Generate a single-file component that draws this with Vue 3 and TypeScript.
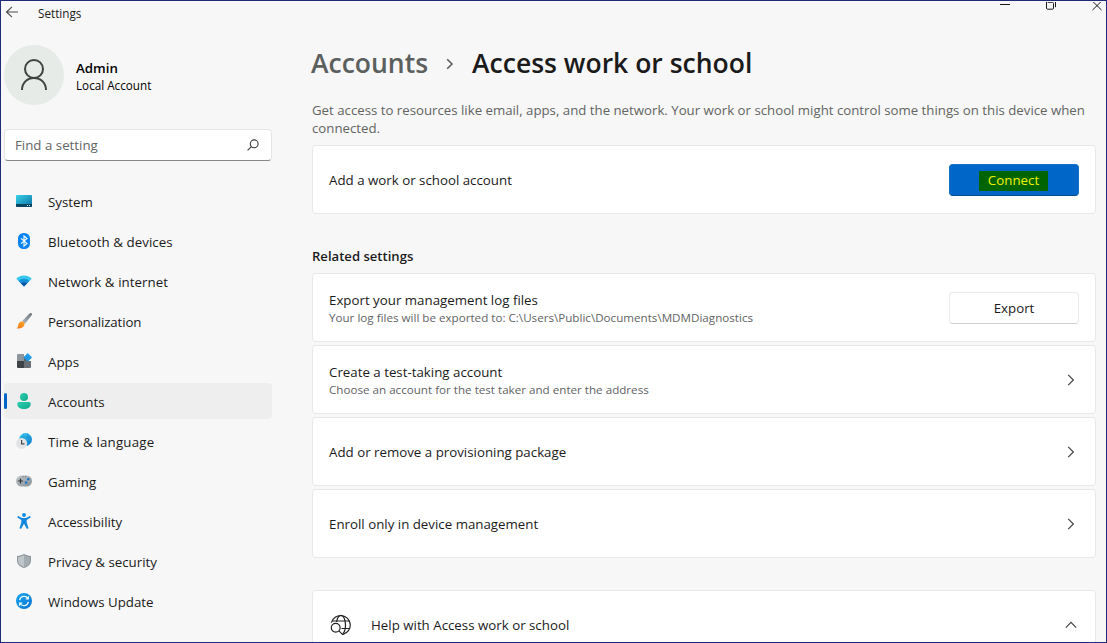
<script setup lang="ts">
interface NavItem {
  id: string
  label: string
}

interface SettingRow {
  id: string
  title: string
  detail?: string
  action?: string
}

const navItems: NavItem[] = [
  { id: 'system', label: 'System' },
  { id: 'bluetooth', label: 'Bluetooth & devices' },
  { id: 'network', label: 'Network & internet' },
  { id: 'personalization', label: 'Personalization' },
  { id: 'apps', label: 'Apps' },
  { id: 'accounts', label: 'Accounts' },
  { id: 'time', label: 'Time & language' },
  { id: 'gaming', label: 'Gaming' },
  { id: 'accessibility', label: 'Accessibility' },
  { id: 'privacy', label: 'Privacy & security' },
  { id: 'update', label: 'Windows Update' },
]

const activeId = 'accounts'

const rows: SettingRow[] = [
  {
    id: 'export',
    title: 'Export your management log files',
    detail: 'Your log files will be exported to: C:\\Users\\Public\\Documents\\MDMDiagnostics',
    action: 'Export',
  },
  {
    id: 'test',
    title: 'Create a test-taking account',
    detail: 'Choose an account for the test taker and enter the address',
  },
  { id: 'package', title: 'Add or remove a provisioning package' },
  { id: 'enroll', title: 'Enroll only in device management' },
]
</script>

<template>
  <div class="window">
    <header class="titlebar">
      <svg class="back" width="14" height="12" viewBox="0 0 14 12" fill="none" stroke="#4c4c4c" stroke-width="1.1">
        <path d="M13 6H1.500M7 .9L1.500 6 7 11.100" />
      </svg>
      <span class="app-name">Settings</span>
      <div class="controls">
        <svg width="110" height="10" viewBox="0 0 110 10" fill="none" stroke="#1a1a1a" stroke-width="1">
          <path d="M4 2.5h10" />
          <path d="M50.5 0v6a1.2 1.2 0 0 0 1.2 1.200h4.600a1.200 1.200 0 0 0 1.200-1.200V1.500a1.200 1.200 0 0 0-1.200-1.200h-4.600M59.500 0v5.200" />
          <path d="M96.300-1l9.200 9M105.700-1l-9.200 9" />
        </svg>
      </div>
    </header>

    <div class="body">
      <aside class="sidebar">
        <div class="profile">
          <div class="avatar">
            <svg width="28" height="32" viewBox="0 0 28 32" fill="none" stroke="#3f4241" stroke-width="2">
              <circle cx="14" cy="10" r="9" />
              <path d="M2 31c0-7 5-12 12-12s12 5 12 12" />
            </svg>
          </div>
          <div class="who">
            <div class="name">Admin</div>
            <div class="kind">Local Account</div>
          </div>
        </div>

        <div class="search">
          <span>Find a setting</span>
          <svg width="12" height="12" viewBox="0 0 12 12" fill="none" stroke="#3c3c3c" stroke-width="1.1">
            <circle cx="7.2" cy="4.8" r="3.9" />
            <path d="M4.4 7.700L.6 11.400" />
          </svg>
        </div>

        <nav>
          <div
            v-for="item in navItems"
            :key="item.id"
            class="nav-item"
            :class="[item.id, { active: item.id === activeId }]"
          >
            <svg width="16" height="16" viewBox="0 0 16 16">
              <template v-if="item.id === 'system'">
                <defs>
                  <linearGradient id="gSys" x1="0" y1="0" x2="1" y2="1">
                    <stop offset="0" stop-color="#38d3e6" /><stop offset="1" stop-color="#0a6fa6" />
                  </linearGradient>
                </defs>
                <rect y="2" width="16" height="12" rx="1" fill="url(#gSys)" />
                <path d="M0 11h16v2a1 1 0 0 1-1 1H1a1 1 0 0 1-1-1z" fill="#0b4561" />
                <path d="M11 12.500h1M13 12.500h1" stroke="#c8edf8" />
              </template>
              <template v-else-if="item.id === 'bluetooth'">
                <rect x="2" width="12" height="16" rx="5.500" fill="#0a84f4" />
                <path d="M5 5.300l6 5.200-3 2.600V2.900l3 2.600-6 5.200" fill="none" stroke="#fff" stroke-width="1.100" />
              </template>
              <template v-else-if="item.id === 'network'">
                <path d="M.3 5.700C4.600 1.500 11.400 1.500 15.700 5.700L8 13.600z" fill="#35c6f0" />
                <path d="M2.600 8C5.600 5 10.400 5 13.400 8L8 13.600z" fill="#1690d6" />
                <path d="M5 10.400c1.700-1.700 4.300-1.700 6 0l-3 3.200z" fill="#0b55a4" />
              </template>
              <template v-else-if="item.id === 'personalization'">
                <defs>
                  <linearGradient id="gBrush" x1="1" y1="0" x2="0" y2="1">
                    <stop offset="0" stop-color="#6b7379" /><stop offset="1" stop-color="#b4bec5" />
                  </linearGradient>
                  <linearGradient id="gTip" x1="1" y1="0" x2="0" y2="1">
                    <stop offset="0" stop-color="#ffa928" /><stop offset="1" stop-color="#ee7414" />
                  </linearGradient>
                </defs>
                <path d="M15.600.3c.7.7.3 1.700-.3 2.500L8.800 11 6 8.200 13 .9c.8-.8 1.900-1.200 2.600-.6z" fill="url(#gBrush)" />
                <path d="M6.500 8.600c1.700.3 2.600 1.800 1.800 3.600C7 15 3.500 16 .6 15.200c1.500-.7 1.300-1.700 1.700-3.500.5-2 2.100-3.400 4.200-3.100z" fill="url(#gTip)" />
              </template>
              <template v-else-if="item.id === 'apps'">
                <path d="M1 2a1 1 0 0 1 1-1h6v7H1z" fill="#8d969c" />
                <path d="M1 8h7v7H2a1 1 0 0 1-1-1z" fill="#3e4347" />
                <path d="M8 8h7v6a1 1 0 0 1-1 1H8z" fill="#687076" />
                <path d="M8 3v5h5z" fill="#596167" />
                <path d="M11.800.5l3.900 3.900-3.900 3.900-3.900-3.900z" fill="#1c9bea" stroke="#1c9bea" stroke-width=".8" stroke-linejoin="round" />
              </template>
              <template v-else-if="item.id === 'accounts'">
                <defs>
                  <linearGradient id="gAcc" x1="0" y1="0" x2="1" y2="1">
                    <stop offset="0" stop-color="#2bcfae" /><stop offset="1" stop-color="#12a88f" />
                  </linearGradient>
                </defs>
                <circle cx="8" cy="4" r="4" fill="url(#gAcc)" />
                <path d="M3 9h10a1.700 1.700 0 0 1 1.700 1.700C14.700 14 12 16 8 16s-6.700-2-6.700-5.300A1.700 1.700 0 0 1 3 9z" fill="url(#gAcc)" />
              </template>
              <template v-else-if="item.id === 'time'">
                <defs>
                  <linearGradient id="gGlobe" x1="0" y1="0" x2="1" y2="1">
                    <stop offset="0" stop-color="#45d6ee" /><stop offset="1" stop-color="#0a76cb" />
                  </linearGradient>
                </defs>
                <circle cx="9.500" cy="6.500" r="6.500" fill="url(#gGlobe)" />
                <path d="M4 4h11.500M4 9h11.500M8 .2c-2 4-2 8 0 12.500M11 .2c2 4 2 8 0 12.500" stroke="#0d86ce" stroke-opacity=".6" stroke-width=".7" fill="none" />
                <circle cx="5.600" cy="10.400" r="5.500" fill="#e2e3e4" />
                <path d="M5.600 7v3.800h2.900" fill="none" stroke="#45494c" stroke-width="1.200" />
              </template>
              <template v-else-if="item.id === 'gaming'">
                <defs>
                  <linearGradient id="gPad" x1="0" y1="0" x2="1" y2="1">
                    <stop offset="0" stop-color="#c5ccd0" /><stop offset="1" stop-color="#838c92" />
                  </linearGradient>
                </defs>
                <rect y="2.500" width="16" height="11" rx="5.500" fill="url(#gPad)" />
                <path d="M4.500 5.500v5M2 8h5" stroke="#30363a" stroke-width="1.200" />
                <path d="M6.500 3.800h1M9 3.800h1" stroke="#5d666c" />
                <circle cx="12.200" cy="6.300" r="1.200" fill="#1476cf" /><circle cx="10" cy="9.500" r="1.200" fill="#1476cf" />
              </template>
              <template v-else-if="item.id === 'accessibility'">
                <circle cx="8" cy="2" r="2" fill="#1593e4" />
                <path d="M2.600 3.200L6 5h4l3.400-1.800c1-.5 1.700 1 .8 1.600L10.700 7v2.600l1.600 5c.3 1.200-1.300 1.700-1.800.6L8 10.800l-2.500 4.400c-.5 1.100-2.100.6-1.800-.6l1.600-5V7L1.800 4.800c-.9-.6-.2-2.100.8-1.600z" fill="#1488dc" />
              </template>
              <template v-else-if="item.id === 'privacy'">
                <path d="M8 .7c2 1.400 4.300 2.100 7 2.200v4.600c0 3.700-2.600 6-7 7.500-4.400-1.500-7-3.800-7-7.500V2.900C3.700 2.800 6 2.100 8 .7z" fill="#8d979d" />
                <path d="M8 2c1.800 1.100 3.700 1.700 5.900 1.900v3.700c0 3-2 4.900-5.900 6.300z" fill="#a4adb2" />
                <path d="M8 2C6.200 3.100 4.300 3.700 2.100 3.900v3.700c0 3 2 4.900 5.900 6.300z" fill="#bfc6ca" />
              </template>
              <template v-else>
                <defs>
                  <linearGradient id="gUpd" x1="0" y1="0" x2="1" y2="1">
                    <stop offset="0" stop-color="#19a5ec" /><stop offset="1" stop-color="#0873d4" />
                  </linearGradient>
                </defs>
                <circle cx="8" cy="8" r="8" fill="url(#gUpd)" />
                <path d="M3.600 7.200A4.600 4.600 0 0 1 12 5.500M12.400 3.200v2.700H9.700M12.400 8.800A4.600 4.600 0 0 1 4 10.500M3.600 12.800v-2.700h2.700" fill="none" stroke="#e9f7ff" stroke-width="1.300" />
              </template>
            </svg>
            <span>{{ item.label }}</span>
          </div>
        </nav>
      </aside>

      <main class="content">
        <h1 class="crumbs">
          <span class="parent">Accounts</span>
          <svg width="8" height="12" viewBox="0 0 8 12" fill="none" stroke="#5b605e" stroke-width="1.600">
            <path d="M1.200 1.200L6 6l-4.800 4.800" />
          </svg>
          <span class="current">Access work or school</span>
        </h1>
        <p class="intro">
          <span>Get access to resources like email, apps, and the network. Your work or school might control some things on this device when</span>
          <span>connected.</span>
        </p>

        <section class="card">
          <div class="title">Add a work or school account</div>
          <button class="btn primary"><span>Connect</span></button>
        </section>

        <h2 class="related">Related settings</h2>
        <div class="stack">
          <section v-for="row in rows" :key="row.id" class="card">
            <div class="texts" :class="{ double: row.detail }">
              <div class="title">{{ row.title }}</div>
              <div v-if="row.detail" class="detail">{{ row.detail }}</div>
            </div>
            <button v-if="row.action" class="btn"><span>{{ row.action }}</span></button>
            <svg v-else class="chev" width="8" height="12" viewBox="0 0 8 12" fill="none" stroke="#444" stroke-width="1.200">
              <path d="M1.200.8L6.400 6l-5.200 5.200" />
            </svg>
          </section>
        </div>

        <section class="card help">
          <svg width="22" height="22" viewBox="0 0 22 22" fill="none" stroke="#222" stroke-width="1.200">
            <path d="M1.400 8.600A9.600 9.600 0 1 1 13 20.400M2 7h18M11.500 14.500h8.400" />
            <path d="M6.600 8C7.300 4 9 1.400 11 1.400c2.600 0 4.500 4.200 4.500 9.600 0 3.800-1 7.300-2.800 8.900" />
            <circle cx="5.700" cy="13.700" r="4.400" />
            <path d="M8.900 16.900l4 4" />
          </svg>
          <div class="title">Help with Access work or school</div>
          <svg class="up" width="12" height="8" viewBox="0 0 12 8" fill="none" stroke="#444" stroke-width="1.200">
            <path d="M.8 6.600L6 1.400l5.200 5.200" />
          </svg>
        </section>
      </main>
    </div>
  </div>
</template>

<style>
body {
  margin: 0;
  overflow: hidden;
}
</style>

<style scoped>
.window {
  box-sizing: border-box;
  width: 1107px;
  height: 643px;
  overflow: hidden;
  border: 1px solid #1f2a78;
  background: #f7f7f7;
  color: #1b1b1b;
  font-family: 'Open Sans', 'Noto Sans', sans-serif;
  font-size: 13.3px;
  line-height: 18px;
  white-space: nowrap;
}
svg {
  display: block;
  flex: none;
}
.titlebar {
  display: flex;
  height: 24px;
  padding-left: 4px;
}
.back {
  margin-top: 5px;
}
.app-name {
  margin: 3px 0 0 19px;
  font-size: 11.7px;
}
.controls {
  margin: 1px 0 0 auto;
}
.body {
  display: flex;
}
.sidebar {
  width: 268px;
  margin-left: 3px;
  padding-top: 20px;
}
.profile {
  display: flex;
  align-items: center;
  height: 60px;
  gap: 12px;
}
.avatar {
  display: flex;
  align-items: center;
  justify-content: center;
  width: 60px;
  height: 60px;
  border-radius: 50%;
  background: #e6ebe8;
}
.who {
  padding-top: 3px;
  color: #000;
}
.name {
  font-weight: 600;
}
.kind {
  font-size: 11.7px;
  line-height: 17px;
}
.search {
  box-sizing: border-box;
  display: flex;
  align-items: center;
  justify-content: space-between;
  height: 32px;
  margin-top: 24px;
  padding: 0 12px 0 10px;
  border: 1px solid #e5e5e5;
  border-bottom-color: #868a88;
  border-radius: 4px;
  background: #fff;
  color: #646665;
}
nav {
  display: grid;
  gap: 4px;
  margin-top: 22px;
}
.nav-item {
  box-sizing: border-box;
  position: relative;
  display: flex;
  align-items: center;
  gap: 16px;
  height: 36px;
  padding: 2px 0 0 12px;
  border-radius: 4px;
}
.nav-item svg {
  margin-bottom: 2px;
}
.nav-item.active {
  background: #eee;
}
.nav-item.active::before {
  content: '';
  position: absolute;
  left: 0;
  top: 10px;
  width: 3px;
  height: 16px;
  border-radius: 2px;
  background: #0067c8;
}
.bluetooth,
.network {
  letter-spacing: 0.06px;
}
.personalization {
  letter-spacing: -0.14px;
}
.time {
  letter-spacing: 0.2px;
}
.content {
  width: 784px;
  margin-left: 40px;
}
.crumbs {
  display: flex;
  align-items: center;
  height: 40px;
  margin: 18px 0 0 -1px;
  font-size: 26.5px;
  font-weight: 600;
  line-height: 40px;
}
.crumbs svg {
  margin: 1px 18px 0;
}
.parent {
  color: #5b605e;
}
.intro {
  margin: 18px 0 0;
  color: #626563;
  font-size: 13.24px;
}
.intro span {
  display: block;
}
.card {
  box-sizing: border-box;
  display: flex;
  align-items: center;
  justify-content: space-between;
  height: 69px;
  padding: 0 16px;
  border: 1px solid #e7e8e8;
  border-radius: 4px;
  background: #fff;
}
.intro + .card {
  margin-top: 8px;
}
.double {
  padding-top: 2px;
}
.detail {
  color: #616463;
  font-size: 11.63px;
}
.btn {
  box-sizing: border-box;
  display: flex;
  align-items: center;
  justify-content: center;
  width: 130px;
  height: 32px;
  padding: 0;
  border: 1px solid #e9eaea;
  border-bottom-color: #cfd1d1;
  border-radius: 4px;
  background: #fff;
  color: #1b1b1b;
  font: inherit;
}
.primary {
  padding-top: 2px;
  padding-right: 1px;
  border-color: #1473cb;
  border-bottom-color: #064b8d;
  background: #0067c8;
  color: #f2f200;
}
.primary span {
  height: 20px;
  padding: 0 9px;
  background: #006500;
}
.related {
  margin: 33px 0 8px;
  font-size: 13.1px;
  font-weight: 600;
}
.stack {
  display: grid;
  gap: 3px;
}
.chev {
  margin-right: 4px;
}
.help {
  justify-content: flex-start;
  margin-top: 32px;
  padding: 0 18px 0 17px;
}
.help .title {
  margin-left: 19px;
}
.up {
  margin-left: auto;
}
</style>
